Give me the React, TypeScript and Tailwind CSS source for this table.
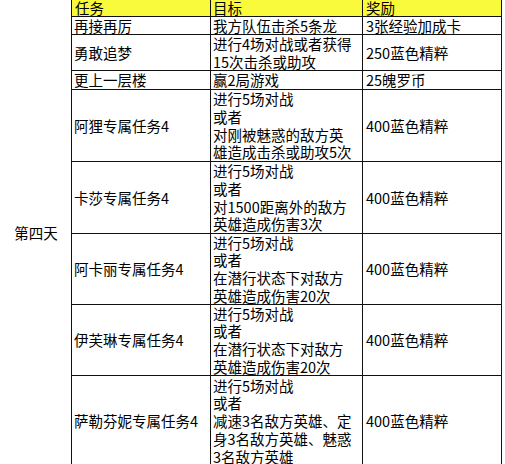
const rows: { task: string; goal: string[]; reward: string }[] = [
  { task: "再接再厉", goal: ["我方队伍击杀5条龙"], reward: "3张经验加成卡" },
  { task: "勇敢追梦", goal: ["进行4场对战或者获得", "15次击杀或助攻"], reward: "250蓝色精粹" },
  { task: "更上一层楼", goal: ["赢2局游戏"], reward: "25魄罗币" },
  {
    task: "阿狸专属任务4",
    goal: ["进行5场对战", "或者", "对刚被魅惑的敌方英", "雄造成击杀或助攻5次"],
    reward: "400蓝色精粹",
  },
  {
    task: "卡莎专属任务4",
    goal: ["进行5场对战", "或者", "对1500距离外的敌方", "英雄造成伤害3次"],
    reward: "400蓝色精粹",
  },
  {
    task: "阿卡丽专属任务4",
    goal: ["进行5场对战", "或者", "在潜行状态下对敌方", "英雄造成伤害20次"],
    reward: "400蓝色精粹",
  },
  {
    task: "伊芙琳专属任务4",
    goal: ["进行5场对战", "或者", "在潜行状态下对敌方", "英雄造成伤害20次"],
    reward: "400蓝色精粹",
  },
  {
    task: "萨勒芬妮专属任务4",
    goal: ["进行5场对战", "或者", "减速3名敌方英雄、定", "身3名敌方英雄、魅惑", "3名敌方英雄"],
    reward: "400蓝色精粹",
  },
];

const font = { fontFamily: '"Noto Sans CJK SC", "Noto Sans", sans-serif' };

export default function App() {
  return (
    <div className="h-[464px] w-[505px] overflow-hidden bg-white text-[14.5px] text-black" style={font}>
      <div className="grid w-[502px] grid-cols-[71px_138px_151px_138px] grid-rows-[16px_17px_35px_18px_71px_71px_70px_70px_90px] gap-px bg-[#111] pr-px">
        <div className="row-span-9 flex items-center justify-center bg-white pl-[1px] leading-[18px]">第四天</div>

        <div className="flex items-center overflow-hidden bg-[#fafa3c] pl-[3px] leading-[16px]">任务</div>
        <div className="flex items-center overflow-hidden bg-[#fafa3c] pl-[2px] leading-[16px]">目标</div>
        <div className="flex items-center overflow-hidden bg-[#fafa3c] pl-[3px] leading-[16px]">奖励</div>

        {rows.map((r) => (
          <Row key={r.task} {...r} />
        ))}
      </div>
    </div>
  );
}

function Row({ task, goal, reward }: { task: string; goal: string[]; reward: string }) {
  return (
    <>
      <div className="flex items-center whitespace-nowrap bg-white pl-[2px] leading-[18px]">{task}</div>
      <div className="flex flex-col justify-center whitespace-nowrap bg-white pl-[2px] leading-[17.75px]">
        {goal.map((line, i) => (
          <span key={i}>{line}</span>
        ))}
      </div>
      <div className="flex items-center whitespace-nowrap bg-white pl-[3px] leading-[18px]">{reward}</div>
    </>
  );
}
